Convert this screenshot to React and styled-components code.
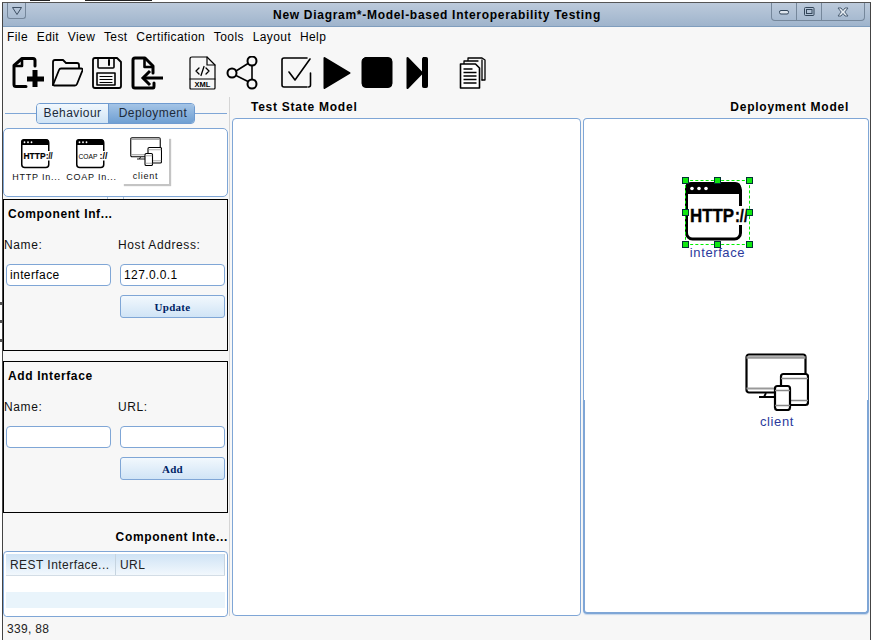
import React from 'react'
import styled, { createGlobalStyle } from 'styled-components'

const GlobalStyle = createGlobalStyle`
  html, body { margin: 0; padding: 0; background: #fff; }
  body {
    width: 872px;
    height: 640px;
    overflow: hidden;
    font-family: "Liberation Sans", Arial, sans-serif;
    background:
      linear-gradient(#555, #555) 0 302px / 2px 3px no-repeat,
      linear-gradient(#555, #555) 0 320px / 2px 3px no-repeat,
      linear-gradient(#555, #555) 0 339px / 2px 3px no-repeat,
      #fff;
  }
  * { box-sizing: border-box; }
`

const WindowShape = ({ children }) => (
  <>
    <rect x="1.5" y="4" width="54" height="55" rx="6" fill="#fff" stroke="#000" strokeWidth="3" />
    <path d="M0 14V8q0-6 6-6h44q6 0 6 6v6z" fill="#000" />
    <circle cx="7" cy="8.5" r="1.8" fill="#fff" />
    <circle cx="14" cy="8.5" r="1.8" fill="#fff" />
    <circle cx="21" cy="8.5" r="1.8" fill="#fff" />
    <rect x="48" y="26" width="16" height="19" fill="#fff" />
    {children}
  </>
)

const HttpIcon = ({ size }) => (
  <NodeSvg width={size} height={size} viewBox="0 0 64 64">
    <WindowShape>
      <IconText x="5" y="42" fontWeight="700" fontSize="18" stroke="#000" strokeWidth="0.4" textLength="44">HTTP</IconText>
      <IconText x="50" y="42" fontWeight="700" fontSize="18" stroke="#000" strokeWidth="0.4" textLength="13">://</IconText>
    </WindowShape>
  </NodeSvg>
)

const CoapIcon = ({ size }) => (
  <NodeSvg width={size} height={size} viewBox="0 0 64 64">
    <WindowShape>
      <IconText x="5" y="41" fontSize="14" textLength="38">COAP</IconText>
      <IconText x="47" y="42" fontWeight="700" fontSize="18" textLength="16">://</IconText>
    </WindowShape>
  </NodeSvg>
)

const ClientIcon = ({ width, height }) => (
  <svg width={width} height={height} viewBox="0 0 64 58" fill="none" stroke="#000">
    <rect x="1.5" y="1.5" width="59" height="38" rx="2.5" fill="#fff" strokeWidth="2.2" />
    <path d="M1.5 4.5h59" stroke="#999" strokeWidth="2.4" />
    <path d="M1.5 35.5h59" stroke="#999" strokeWidth="2" />
    <path d="M14 44h16M21 40l-2 4" strokeWidth="1.8" />
    <rect x="36" y="21" width="27" height="31" rx="2.5" fill="#fff" strokeWidth="2.2" />
    <path d="M36 25.5h27M36 47.5h27" stroke="#888" strokeWidth="1.4" />
    <rect x="30" y="33" width="15" height="24" rx="2.5" fill="#fff" strokeWidth="2.2" />
    <path d="M30 37.5h15M30 52.5h15" stroke="#888" strokeWidth="1.4" />
  </svg>
)

const ToolIcon = ({ width = 32, children, fill = 'none' }) => (
  <svg width={width} height="34" viewBox={`0 0 ${width} 34`} fill={fill} stroke="#000" strokeLinejoin="round" strokeLinecap="round">
    {children}
  </svg>
)

const toolbarIcons = [
  { gap: 9, node: (
    <ToolIcon>
      <path d="M14 30.5H4q-2 0-2-2V9.5L10 2.5h11q2 0 2 2V10" strokeWidth="3" />
      <path d="M10 3v7H3" strokeWidth="2.6" />
      <path d="M23 14v17M15 23h17" strokeWidth="5" strokeLinecap="butt" />
    </ToolIcon>
  ) },
  { gap: 7, node: (
    <ToolIcon>
      <path d="M2 29V6q0-2 2-2h8l3 3h11q2 0 2 2v3" strokeWidth="1.8" />
      <path d="M2 29 8 14q.6-1.5 2-1.5h20q2 0 1.4 2L26 28q-.6 1.5-2 1.5H3z" strokeWidth="1.8" />
    </ToolIcon>
  ) },
  { gap: 8, node: (
    <ToolIcon>
      <path d="M2 4q0-2 2-2h22l4 4v24q0 2-2 2H4q-2 0-2-2z" strokeWidth="1.8" />
      <path d="M7 2v9q0 1 1 1h14q1 0 1-1V2" strokeWidth="1.6" />
      <path d="M18 4v5" strokeWidth="2" />
      <rect x="6" y="17" width="18" height="12" strokeWidth="1.6" />
      <path d="M9 20.5h12M9 23.5h12M9 26.5h12" strokeWidth="1.2" />
    </ToolIcon>
  ) },
  { gap: 8, node: (
    <ToolIcon>
      <path d="M22 17V10L14 2H4q-2 0-2 2v26q0 2 2 2h18q1 0 1-2v-3" strokeWidth="3" />
      <path d="M13.5 3v8h8" strokeWidth="2.6" />
      <path d="M32 22H14" strokeWidth="3" />
      <path d="M19 15l-7 7 7 7" strokeWidth="3" strokeLinecap="butt" strokeLinejoin="miter" />
    </ToolIcon>
  ) },
  { gap: 26, node: (
    <ToolIcon width={27}>
      <path d="M1 3q0-2 2-2h15l8 8v23q0 1-1 1H2q-1 0-1-1z" strokeWidth="1.2" />
      <path d="M18 1v8h8" strokeWidth="1.2" />
      <path d="M10 12l-3 3 3 3M17 12l3 3-3 3M15 10.5l-3 9" strokeWidth="1.3" />
      <path d="M1 23h25" strokeWidth="1.2" />
      <text x="13.5" y="31" textAnchor="middle" stroke="none" fill="#000" fontFamily="'Liberation Sans', sans-serif" fontSize="7.5" fontWeight="700">XML</text>
    </ToolIcon>
  ) },
  { gap: 10, node: (
    <ToolIcon>
      <circle cx="6" cy="17" r="4.5" strokeWidth="2" />
      <circle cx="26" cy="5" r="4.5" strokeWidth="2" />
      <circle cx="26" cy="28" r="4.5" strokeWidth="2" />
      <path d="M10 15 22 7.5M10 19.5 22 25.5M26 10v13" strokeWidth="1.6" />
    </ToolIcon>
  ) },
  { gap: 23, node: (
    <ToolIcon>
      <path d="M26 31H3q-2 0-2-2V4q0-2 2-2h23" strokeWidth="1.6" />
      <path d="M29.5 17v12q0 2-2 2" strokeWidth="1.6" />
      <path d="M8 16l6 8L29 3" strokeWidth="1.6" />
    </ToolIcon>
  ) },
  { gap: 10, node: (
    <ToolIcon width={28} fill="#000">
      <path d="M1.5 2 26.500 17 1.5 32z" strokeWidth="2" />
    </ToolIcon>
  ) },
  { gap: 10, node: (
    <ToolIcon fill="#000">
      <rect x="1" y="1.5" width="30" height="30" rx="4" strokeWidth="1" />
    </ToolIcon>
  ) },
  { gap: 13, node: (
    <ToolIcon width={23} fill="#000">
      <path d="M1.5 2 16 17 1.5 32z" strokeWidth="2" />
      <rect x="16.5" y="1.5" width="5" height="30" rx="1" strokeWidth="1" />
    </ToolIcon>
  ) },
  { gap: 30, node: (
    <ToolIcon width={27}>
      <path d="M9 4V2h14l3 2v20h-3M5 8V5h14" strokeWidth="1.3" />
      <path d="M23 4v20" strokeWidth="1.3" />
      <path d="M1.5 8h15l4 4v20h-19z" fill="#fff" strokeWidth="1.6" />
      <path d="M4.5 13h9M4.5 16.5h13M4.5 20h13M4.5 23.5h13M4.5 27h13" strokeWidth="1.4" strokeLinecap="butt" />
    </ToolIcon>
  ) },
]

const menuItems = ['File', 'Edit', 'View', 'Test', 'Certification', 'Tools', 'Layout', 'Help']
const handles = [[0, 0], [32, 0], [64, 0], [0, 32], [64, 32], [0, 64], [32, 64], [64, 64]]

export default function App() {
  return (
    <>
      <GlobalStyle />
      <BackWindow />
      <Frame>
        <TitleBar>
          <SystemButton>
            <svg width="12" height="10" viewBox="0 0 12 10" fill="none" stroke="#3d4f63"><path d="M1.5 1.5h9L6 8.5z" /></svg>
          </SystemButton>
          <Title>New Diagram*-Model-based Interoperability Testing</Title>
          <WindowButtons>
            <WindowButton $width={25}>
              <svg width="12" height="8" viewBox="0 0 12 8" fill="#dfe6ee" stroke="#33465a"><rect x="1.5" y="2.5" width="9" height="3.5" rx="1.5" /></svg>
            </WindowButton>
            <WindowButton $width={25}>
              <svg width="12" height="11" viewBox="0 0 12 11" fill="none" stroke="#33465a"><rect x="1.5" y="1.5" width="9.5" height="8" rx="1" /><rect x="3.5" y="3.5" width="5.5" height="4" /></svg>
            </WindowButton>
            <WindowButton $width={42} $last>
              <svg width="12" height="10" viewBox="0 0 12 10" fill="#e6ecf2" stroke="#4a5d72"><path d="M1 1h3l2 2.5L8 1h3L7.8 5 11 9H8L6 6.5 4 9H1l3.2-4z" /></svg>
            </WindowButton>
          </WindowButtons>
        </TitleBar>

        <MenuBar>
          {menuItems.map((item) => <MenuItem key={item}>{item}</MenuItem>)}
        </MenuBar>

        <Toolbar>
          {toolbarIcons.map((icon, i) => <ToolButton key={i} $gap={icon.gap}>{icon.node}</ToolButton>)}
        </Toolbar>

        <Main>
          <Sidebar>
            <TabRow>
              <TabLine $width="31px" />
              <Tabs>
                <Tab $width={71}>Behaviour</Tab>
                <Tab $width={86} $active>Deployment</Tab>
              </Tabs>
              <TabLine />
            </TabRow>

            <Palette>
              <PaletteItem $width={55}>
                <HttpIcon size={32} />
                <PaletteLabel>HTTP In...</PaletteLabel>
              </PaletteItem>
              <PaletteItem $width={55}>
                <CoapIcon size={32} />
                <PaletteLabel>COAP In...</PaletteLabel>
              </PaletteItem>
              <PaletteItem $width={47} $selected>
                <ClientIcon width={32} height={29} />
                <PaletteLabel $selected>client</PaletteLabel>
              </PaletteItem>
            </Palette>
            <SplitGrip />

            <FormBox>
              <FormTitle>Component Inf...</FormTitle>
              <FormGrid>
                <FieldLabel>Name:</FieldLabel>
                <FieldLabel>Host Address:</FieldLabel>
                <TextInput readOnly value="interface" />
                <TextInput readOnly value="127.0.0.1" />
                <ActionButton>Update</ActionButton>
              </FormGrid>
            </FormBox>

            <FormBox $spaced>
              <FormTitle>Add Interface</FormTitle>
              <FormGrid>
                <FieldLabel>Name:</FieldLabel>
                <FieldLabel>URL:</FieldLabel>
                <TextInput readOnly value="" />
                <TextInput readOnly value="" />
                <ActionButton>Add</ActionButton>
              </FormGrid>
            </FormBox>

            <TableTitle>Component Inte...</TableTitle>
            <TableBox>
              <TableHead>
                <HeadCell $width={110}>REST Interface...</HeadCell>
                <HeadCell $width={109}>URL</HeadCell>
              </TableHead>
              <TableRow />
              <TableRow $striped />
              <TableRow />
            </TableBox>
          </Sidebar>

          <Column $width={349}>
            <PanelHeading>Test State Model</PanelHeading>
            <Panel />
          </Column>

          <Column $width={286}>
            <PanelHeading $right>Deployment Model</PanelHeading>
            <DeployPanel>
              <DeployUpper>
                <SelectedNode>
                  <HttpIcon size={64} />
                  <SelectionBox />
                  {handles.map(([x, y]) => <Handle key={`${x}-${y}`} $x={x} $y={y} />)}
                  <NodeLabel $x={0} $y={66} $width={65}>interface</NodeLabel>
                </SelectedNode>
              </DeployUpper>
              <DeployLower>
                <ClientNode>
                  <ClientIcon width={64} height={58} />
                  <NodeLabel $x={0} $y={62} $width={64}>client</NodeLabel>
                </ClientNode>
              </DeployLower>
            </DeployPanel>
          </Column>
        </Main>

        <StatusBar>339, 88</StatusBar>
      </Frame>
    </>
  )
}

const NodeSvg = styled.svg`
  display: block;
  overflow: visible;
  flex: none;
`
const IconText = styled.text.attrs({ lengthAdjust: 'spacingAndGlyphs' })`
  font-family: "Liberation Sans", Arial, sans-serif;
  fill: #000;
`
const BackWindow = styled.div`
  height: 2px;
  background:
    linear-gradient(#222, #222) 30px 0 / 20px 1px no-repeat,
    linear-gradient(#222, #222) 85px 0 / 67px 1px no-repeat,
    #fff;
`
const Frame = styled.div`
  width: 869px;
  height: 638px;
  margin-left: 2px;
  display: flex;
  flex-direction: column;
  background: #f7f7f7;
  border-left: 1px solid #444;
  border-right: 1px solid #444;
  border-top: 1px solid #555;
`
const TitleBar = styled.div`
  height: 24px;
  flex: none;
  position: relative;
  display: flex;
  align-items: flex-start;
  justify-content: space-between;
  background: linear-gradient(#bccadb, #9fb4cc);
  border-bottom: 1px solid #7f9dbd;
`
const SystemButton = styled.div`
  width: 19px;
  height: 16px;
  margin-left: 4px;
  display: flex;
  align-items: center;
  justify-content: center;
  border: 1px solid #75879b;
  border-top: none;
  border-radius: 0 0 3px 3px;
`
const Title = styled.div`
  position: absolute;
  left: 270px;
  top: 3px;
  font-size: 12px;
  line-height: 18px;
  font-weight: 700;
  letter-spacing: 0.71px;
  white-space: nowrap;
  color: #000;
`
const WindowButtons = styled.div`
  display: flex;
  margin-right: 5px;
  height: 18px;
  border: 1px solid #75879b;
  border-top: none;
  border-radius: 0 0 4px 4px;
`
const WindowButton = styled.div`
  width: ${(p) => p.$width}px;
  display: flex;
  align-items: center;
  justify-content: center;
  border-right: ${(p) => (p.$last ? 'none' : '1px solid #75879b')};
`
const MenuBar = styled.div`
  height: 20px;
  flex: none;
  display: flex;
  align-items: center;
  gap: 8.7px;
  padding-left: 4px;
`
const MenuItem = styled.span`
  font-size: 12px;
  letter-spacing: 0.42px;
  color: #000;
`
const Toolbar = styled.div`
  height: 50px;
  flex: none;
  display: flex;
  align-items: flex-start;
  padding-top: 9px;
`
const ToolButton = styled.div`
  margin-left: ${(p) => p.$gap}px;
  display: flex;
`
const Main = styled.div`
  flex: 1;
  min-height: 0;
  display: flex;
`
const Sidebar = styled.div`
  width: 227px;
  flex: none;
  display: flex;
  flex-direction: column;
  border-right: 1px solid #d5d5d5;
`
const TabRow = styled.div`
  height: 22px;
  flex: none;
  margin-top: 5px;
  margin-right: 2px;
  display: flex;
  align-items: center;
  padding-left: 2px;
`
const TabLine = styled.div`
  flex: ${(p) => (p.$width ? `0 0 ${p.$width}` : '1')};
  height: 1px;
  background: #7fa6d6;
`
const Tabs = styled.div`
  display: flex;
  height: 21px;
  flex: none;
  border: 1px solid #6f9bd0;
  border-radius: 4px;
  overflow: hidden;
`
const Tab = styled.div`
  width: ${(p) => p.$width}px;
  display: flex;
  align-items: center;
  justify-content: center;
  padding-left: ${(p) => (p.$active ? '3px' : '0')};
  font-size: 12px;
  letter-spacing: 0.45px;
  color: #1c2a3a;
  background: ${(p) => (p.$active ? 'linear-gradient(#a4c4e6, #6f9fd2)' : 'linear-gradient(#f2f8fd, #cfe3f5)')};
  border-left: ${(p) => (p.$active ? '1px solid #6f9bd0' : 'none')};
`
const Palette = styled.div`
  height: 69px;
  flex: none;
  margin: 4px 1px 0 0;
  display: flex;
  align-items: flex-start;
  padding: 8px 0 0 5px;
  background: #fff;
  border: 1px solid #7fa6d6;
  border-radius: 5px;
`
const PaletteItem = styled.div`
  width: ${(p) => p.$width}px;
  height: 47px;
  margin-left: ${(p) => (p.$selected ? '3px' : '0')};
  display: flex;
  flex-direction: column;
  align-items: center;
  padding-top: ${(p) => (p.$selected ? '0' : '1px')};
  box-shadow: ${(p) => (p.$selected ? '2px 2px 1px #c4c4c4' : 'none')};
`
const PaletteLabel = styled.div`
  margin-top: ${(p) => (p.$selected ? '5px' : '2px')};
  font-size: 9px;
  line-height: 11px;
  letter-spacing: 0.75px;
  white-space: nowrap;
  color: #111;
`
const SplitGrip = styled.div`
  width: 17px;
  height: 2px;
  flex: none;
  margin-left: 104px;
  border-left: 1px solid #a8bfd8;
  border-right: 1px solid #a8bfd8;
`
const FormBox = styled.div`
  height: 152px;
  flex: none;
  margin: ${(p) => (p.$spaced ? '10px' : '0')} 1px 0 0;
  border: 1px solid #000;
  background: #f7f7f7;
`
const FormTitle = styled.div`
  margin: 7px 0 0 4px;
  font-size: 12px;
  line-height: 15px;
  font-weight: 700;
  letter-spacing: 0.62px;
  color: #000;
`
const FormGrid = styled.div`
  display: grid;
  grid-template-columns: 105px 105px;
  column-gap: 9px;
  margin: 16px 0 0 2px;
`
const FieldLabel = styled.div`
  margin-left: -2px;
  height: 26px;
  font-size: 12px;
  line-height: 14px;
  letter-spacing: 0.6px;
  color: #111;
`
const TextInput = styled.input`
  width: 105px;
  height: 22px;
  padding: 0 3px;
  font-family: "Liberation Sans", Arial, sans-serif;
  font-size: 12px;
  letter-spacing: 0.4px;
  color: #000;
  background: #fff;
  border: 1px solid #7fa6d6;
  border-radius: 4px;
  outline: none;
`
const ActionButton = styled.div`
  grid-column: 2;
  height: 23px;
  margin-top: 9px;
  display: flex;
  align-items: center;
  justify-content: center;
  font-family: "Liberation Serif", "Times New Roman", serif;
  font-size: 11px;
  font-weight: 700;
  letter-spacing: 0.3px;
  color: #001f66;
  background: linear-gradient(#f2f8fd, #d0e4f6);
  border: 1px solid #7fa6d6;
  border-radius: 3px;
`
const TableTitle = styled.div`
  height: 38px;
  flex: none;
  padding: 17px 1px 0 0;
  text-align: right;
  font-size: 12px;
  line-height: 15px;
  font-weight: 700;
  letter-spacing: 0.65px;
  color: #000;
`
const TableBox = styled.div`
  height: 66px;
  flex: none;
  margin-right: 1px;
  padding: 2px 2px 0;
  overflow: hidden;
  background: #fff;
  border: 1px solid #7fa6d6;
  border-radius: 4px;
`
const TableHead = styled.div`
  display: flex;
  height: 22px;
  background: linear-gradient(#cfe3f5, #f2f8fd);
  border-bottom: 1px solid #d3dde6;
`
const HeadCell = styled.div`
  width: ${(p) => p.$width}px;
  padding-left: 4px;
  border-right: 1px solid #c6d4e0;
  font-size: 12px;
  line-height: 22px;
  letter-spacing: 0.45px;
  color: #222;
`
const TableRow = styled.div`
  height: 16px;
  background: ${(p) => (p.$striped ? '#e9f4fb' : '#fff')};
`
const Column = styled.div`
  width: ${(p) => p.$width}px;
  margin-left: 2px;
  flex: none;
  display: flex;
  flex-direction: column;
`
const PanelHeading = styled.div`
  height: 21px;
  flex: none;
  padding: ${(p) => (p.$right ? '3px 20px 0 0' : '3px 0 0 19px')};
  text-align: ${(p) => (p.$right ? 'right' : 'left')};
  font-size: 12px;
  line-height: 15px;
  font-weight: 700;
  letter-spacing: 0.75px;
  color: #000;
`
const Panel = styled.div`
  height: 498px;
  flex: none;
  background: #fff;
  border: 1px solid #7fa6d6;
  border-radius: 4px;
`
const DeployPanel = styled.div`
  height: 496px;
  flex: none;
  display: flex;
  flex-direction: column;
  background: #fff;
`
const DeployUpper = styled.div`
  height: 282px;
  position: relative;
  border: 1px solid #7fa6d6;
  border-bottom: none;
  border-radius: 4px 4px 0 0;
`
const DeployLower = styled.div`
  flex: 1;
  position: relative;
  border: 2px solid #7fa6d6;
  border-top: none;
  border-radius: 0 0 4px 4px;
  box-shadow: 0 1px 1px #c5d6ea;
`
const SelectedNode = styled.div`
  position: absolute;
  left: 101px;
  top: 61px;
  width: 64px;
  height: 64px;
`
const SelectionBox = styled.div`
  position: absolute;
  left: 0;
  top: 0;
  width: 65px;
  height: 65px;
  border: 1px dashed #00f000;
`
const Handle = styled.div`
  position: absolute;
  left: ${(p) => p.$x - 3}px;
  top: ${(p) => p.$y - 3}px;
  width: 7px;
  height: 7px;
  background: #10e810;
  border: 1px solid #033;
`
const NodeLabel = styled.div`
  position: absolute;
  left: ${(p) => p.$x}px;
  top: ${(p) => p.$y}px;
  width: ${(p) => p.$width}px;
  text-align: center;
  font-size: 13px;
  line-height: 14px;
  letter-spacing: 0.6px;
  color: #2b3a9c;
`
const ClientNode = styled.div`
  position: absolute;
  left: 160px;
  top: -47px;
  width: 64px;
  height: 80px;
`
const StatusBar = styled.div`
  height: 24px;
  flex: none;
  padding: 6px 0 0 4px;
  font-size: 12px;
  line-height: 14px;
  letter-spacing: 0.3px;
  color: #222;
`
